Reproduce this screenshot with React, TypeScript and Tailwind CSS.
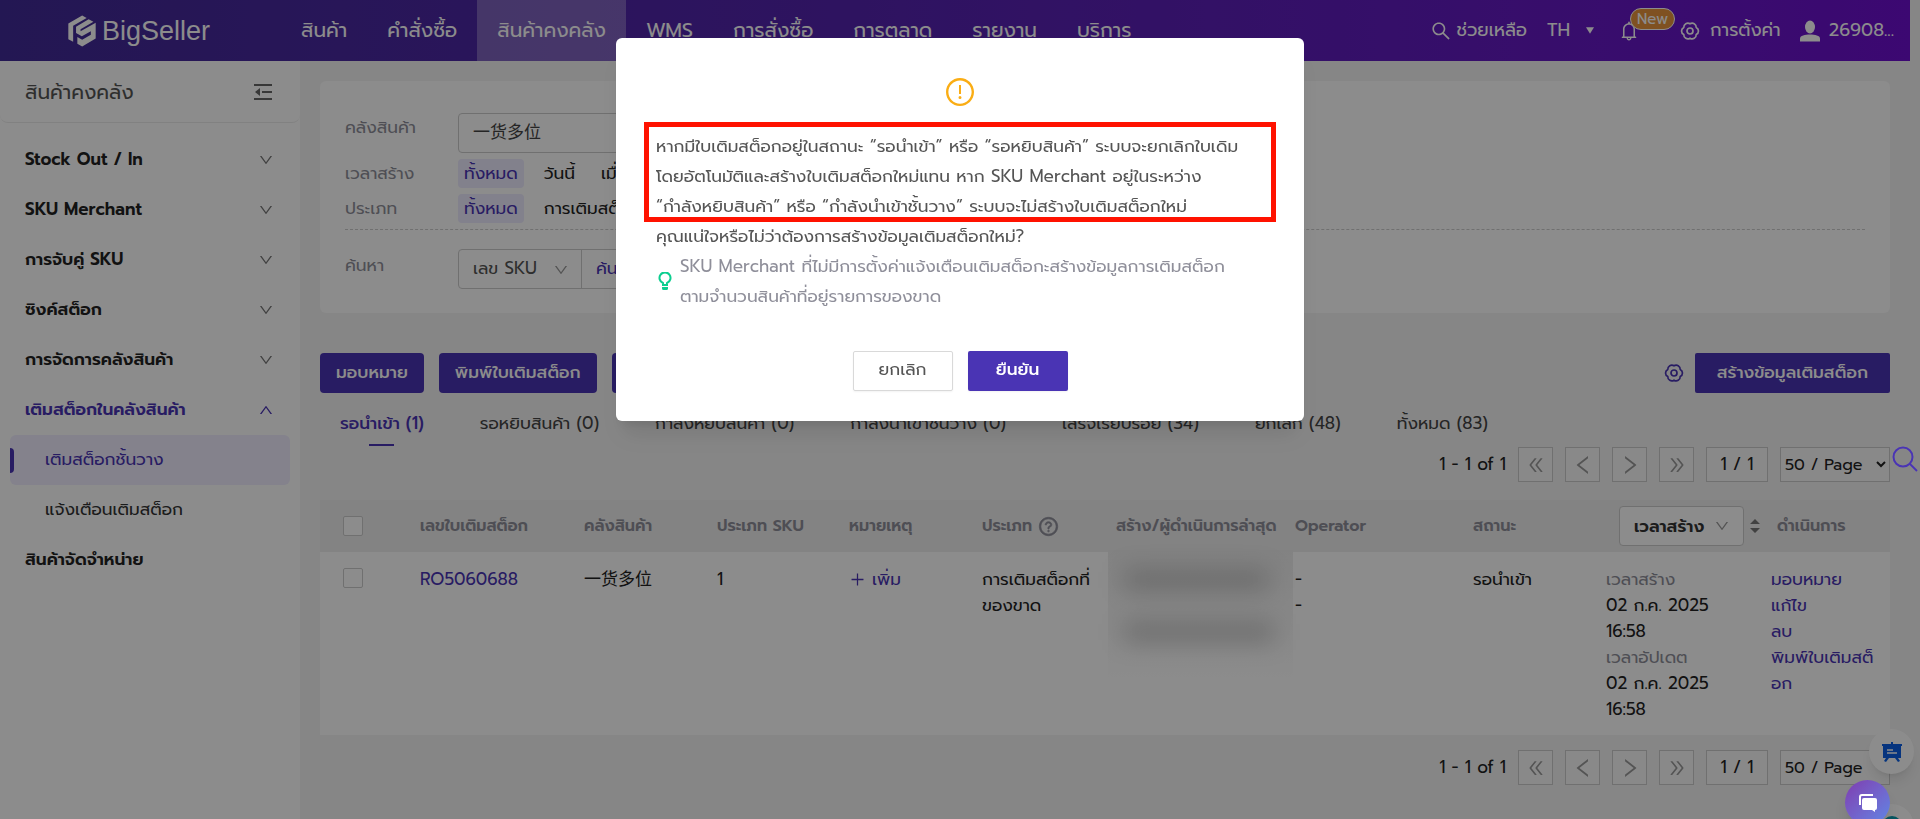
import {
  AiOutlineBell,
  AiOutlineDoubleLeft,
  AiOutlineDoubleRight,
  AiOutlineDown,
  AiOutlineExclamationCircle,
  AiOutlineLeft,
  AiOutlinePlus,
  AiOutlineQuestionCircle,
  AiOutlineRight,
  AiOutlineSearch,
  AiOutlineUp,
} from "react-icons/ai"
import clsx from "clsx"

const navLinks = ["สินค้า", "คำสั่งซื้อ", "สินค้าคงคลัง", "WMS", "การสั่งซื้อ", "การตลาด", "รายงาน", "บริการ"]

const sideLinks = ["Stock Out / In", "SKU Merchant", "การจับคู่ SKU", "ซิงค์สต็อก", "การจัดการคลังสินค้า"]

const tabs = [
  "รอนำเข้า (1)",
  "รอหยิบสินค้า (0)",
  "กำลังหยิบสินค้า (0)",
  "กำลังนำเข้าชั้นวาง (0)",
  "เสร็จเรียบร้อย (34)",
  "ยกเลิก (48)",
  "ทั้งหมด (83)",
]

const GearIcon = () => (
  <svg viewBox="0 0 20 20" className="size-5" fill="none" stroke="currentColor" strokeWidth="1.700" aria-hidden="true">
    <path
      strokeLinejoin="round"
      d="M16.200 13.600A4 4 0 0 1 10 17.200A4 4 0 0 1 3.800 13.600A4 4 0 0 1 3.800 6.400A4 4 0 0 1 10 2.800A4 4 0 0 1 16.200 6.400A4 4 0 0 1 16.200 13.600z"
    />
    <circle cx="10" cy="10" r="3" />
  </svg>
)

const Logo = () => (
  <a href="#" className="flex items-center gap-1.5 text-white">
    <svg viewBox="24 29 87 97" className="h-8 w-7" fill="currentColor" aria-hidden="true">
      <path d="M25 103V54L68 29l14 8-42 24v50z" />
      <path d="M88 41l15 8-40 23v6l47-26v49l-42 25-15-9V96l15 9 27-16V78l-28 16-18-10V64z" />
    </svg>
    <span className="font-['Liberation_Sans',sans-serif] text-[27px] leading-8">BigSeller</span>
  </a>
)

const Header = () => (
  <header className="mr-2.5 flex h-[61px] items-center bg-linear-to-r from-[#412a97] to-[#6d0fcf] pl-[68px] pr-4 text-white">
    <Logo />
    <nav className="ml-[71px] flex h-full text-[20px]">
      {navLinks.map((link) => (
        <a
          key={link}
          href="#"
          className={clsx("flex items-center whitespace-nowrap px-5 pb-0.5", link === "สินค้าคงคลัง" && "bg-white/28")}
        >
          {link}
        </a>
      ))}
    </nav>
    <div className="ml-auto flex items-center whitespace-nowrap text-[18px]">
      <a href="#" className="flex items-center gap-1">
        <AiOutlineSearch className="size-[22px]" />
        ช่วยเหลือ
      </a>
      <button type="button" className="ml-5 flex items-center gap-4">
        TH
        <svg viewBox="0 0 10 8" className="h-[7px] w-2" fill="currentColor" aria-hidden="true">
          <path d="M0 0h10L5 8z" />
        </svg>
      </button>
      <button type="button" aria-label="New" className="relative ml-6">
        <AiOutlineBell className="size-[22px]" />
        <span className="absolute bottom-3 left-3 rounded-full border border-white bg-[#e8943c] px-1.5 text-[15px] leading-5">
          New
        </span>
      </button>
      <a href="#" className="ml-10 flex items-center gap-2.5">
        <GearIcon />
        การตั้งค่า
      </a>
      <a href="#" className="ml-[18px] flex items-center gap-2">
        <svg viewBox="0 0 22 22" className="size-[22px]" fill="currentColor" aria-hidden="true">
          <ellipse cx="11" cy="7" rx="5" ry="6.5" />
          <path d="M1 21.500v-3c0-3 5-4 10-4s10 1 10 4v3z" />
        </svg>
        26908...
      </a>
    </div>
  </header>
)

const Sidebar = () => (
  <aside className="w-[300px] shrink-0 bg-white">
    <div className="flex h-[62px] items-center justify-between rounded-b-lg border-b border-[#ececec] pl-[25px] pr-7 text-[20px] text-[#555]">
      สินค้าคงคลัง
      <button type="button" aria-label="Collapse menu" className="text-[#666]">
        <svg viewBox="0 0 18 18" className="size-[18px]" fill="currentColor" aria-hidden="true">
          <path d="M0 1h18v2H0zM8 8h10v2H8zM0 15h18v2H0zM1 9l5-4v8z" />
        </svg>
      </button>
    </div>
    <nav className="px-2.5 pt-3">
      {sideLinks.map((link) => (
        <a
          key={link}
          href="#"
          className="flex h-[50px] items-center justify-between pl-[15px] pr-4 font-semibold text-[#222]"
        >
          {link}
          <AiOutlineDown className="size-4 text-[#777]" />
        </a>
      ))}
      <a href="#" className="flex h-[50px] items-center justify-between pl-[15px] pr-4 font-semibold text-[#4a34b4]">
        เติมสต็อกในคลังสินค้า
        <AiOutlineUp className="size-4" />
      </a>
      <a href="#" className="flex h-[50px] items-center rounded-md bg-[#f0edff] text-[#4a34b4]">
        <span className="mr-[31px] h-[25px] w-1 rounded-r-sm bg-[#4a34b4]" />
        เติมสต็อกชั้นวาง
      </a>
      <a href="#" className="flex h-[50px] items-center pl-[35px] text-[#333]">
        แจ้งเตือนเติมสต็อก
      </a>
      <a href="#" className="flex h-[50px] items-center pl-[15px] font-semibold text-[#222]">
        สินค้าจัดจำหน่าย
      </a>
    </nav>
  </aside>
)

const FilterRow = ({ label, options }: { label: string; options: string[] }) => (
  <div className="mt-1.5 flex h-[29px] items-center">
    <span className="w-[113px] text-[#8f8f9a]">{label}</span>
    <div className="flex gap-3.5">
      {options.map((option, i) => (
        <button
          key={option}
          type="button"
          className={clsx("h-[29px] whitespace-nowrap rounded-sm px-1.5", i === 0 && "bg-[#edebff] text-[#4a34b4]")}
        >
          {option}
        </button>
      ))}
    </div>
  </div>
)

const Filters = () => (
  <section className="rounded-md bg-white px-[25px] pb-6 pt-8">
    <div className="flex h-10">
      <label htmlFor="warehouse" className="w-[113px] pt-0.5 text-[#8f8f9a]">
        คลังสินค้า
      </label>
      <select id="warehouse" className="w-80 appearance-none rounded-sm border border-[#ccc] px-3.5 text-[#444]">
        <option>一货多位</option>
      </select>
    </div>
    <FilterRow label="เวลาสร้าง" options={["ทั้งหมด", "วันนี้", "เมื่อวาน"]} />
    <FilterRow label="ประเภท" options={["ทั้งหมด", "การเติมสต็อก"]} />
    <div className="mt-1.5 flex border-t border-dashed border-[#ccc] pt-[19px]">
      <label htmlFor="search-by" className="w-[113px] pt-1 text-[#8f8f9a]">
        ค้นหา
      </label>
      <div className="flex h-10 rounded-sm border border-[#ccc]">
        <div className="relative flex border-r border-[#ccc]">
          <select id="search-by" className="w-[122px] appearance-none pl-3.5 text-[#555]">
            <option>เลข SKU</option>
          </select>
          <AiOutlineDown className="pointer-events-none absolute right-3 top-3 size-4 text-[#999]" />
        </div>
        <select aria-label="ค้นหา" className="w-40 appearance-none pl-3.5 text-[#4a34b4]">
          <option>ค้นหา</option>
        </select>
      </div>
    </div>
  </section>
)

const Actions = () => (
  <div className="mt-10 flex items-center gap-[15px] font-medium">
    {["มอบหมาย", "พิมพ์ใบเติมสต็อก", "ลบ"].map((label) => (
      <button key={label} type="button" className="h-10 whitespace-nowrap rounded-sm bg-[#4a34b4] px-4 text-white">
        {label}
      </button>
    ))}
    <button type="button" aria-label="Settings" className="-mr-1 ml-auto text-[#4a34b4]">
      <GearIcon />
    </button>
    <button type="button" className="h-10 whitespace-nowrap rounded-xs bg-[#4a34b4] px-[22px] text-white">
      สร้างข้อมูลเติมสต็อก
    </button>
  </div>
)

const Tabs = () => (
  <div className="mt-[17px] flex gap-14 pb-px pl-5 leading-[26px] text-[#444]">
    {tabs.map((tab, i) => (
      <button
        key={tab}
        type="button"
        className={clsx("flex flex-col items-center gap-2 whitespace-nowrap", i === 0 && "font-medium text-[#4a34b4]")}
      >
        {tab}
        <span className={clsx("h-0.5 w-[25px]", i === 0 && "bg-[#4a34b4]")} />
      </button>
    ))}
  </div>
)

const pagerIcons = [
  { label: "First page", Icon: AiOutlineDoubleLeft, size: "size-5" },
  { label: "Previous page", Icon: AiOutlineLeft, size: "size-6" },
  { label: "Next page", Icon: AiOutlineRight, size: "size-6" },
  { label: "Last page", Icon: AiOutlineDoubleRight, size: "size-5" },
]

const Pagination = () => (
  <div className="flex items-center justify-end gap-3 text-[#222]">
    <span>1 - 1 of 1</span>
    {pagerIcons.map(({ label, Icon, size }) => (
      <button
        key={label}
        type="button"
        aria-label={label}
        className="flex size-[35px] items-center justify-center border border-[#ccc] bg-white/50 text-[#999]"
      >
        <Icon className={size} />
      </button>
    ))}
    <span className="flex h-[35px] w-[62px] items-center justify-center border border-[#ccc] bg-white/50">1 / 1</span>
    <select aria-label="Page size" className="h-[35px] w-[110px] border border-[#ccc] bg-white/50 text-[16px]">
      <option>50 / Page</option>
    </select>
  </div>
)

const Checkbox = ({ label }: { label: string }) => (
  <input
    type="checkbox"
    aria-label={label}
    className="block size-5 appearance-none rounded-xs border border-[#ccc] bg-white"
  />
)

const OrderTable = () => (
  <table className="mb-[15px] mt-[18px] w-full table-fixed text-left leading-[26px] text-[#222]">
    <thead className="bg-[#eee] text-[16px] text-[#8f8f9a]">
      <tr className="h-[52px] whitespace-nowrap *:p-0 *:pl-2.5 *:font-semibold">
        <th className="w-[90px]">
          <div className="pl-[13px]">
            <Checkbox label="Select all" />
          </div>
        </th>
        <th className="w-[164px]">เลขใบเติมสต็อก</th>
        <th className="w-[133px]">คลังสินค้า</th>
        <th className="w-[132px]">ประเภท SKU</th>
        <th className="w-[133px]">หมายเหตุ</th>
        <th className="w-[134px]">
          <span className="flex items-center gap-1.5">
            ประเภท <AiOutlineQuestionCircle className="size-[21px]" stroke="currentColor" strokeWidth={36} />
          </span>
        </th>
        <th className="w-[179px]">สร้าง/ผู้ดำเนินการล่าสุด</th>
        <th className="w-[178px]">Operator</th>
        <th className="w-[133px]">สถานะ</th>
        <th className="w-[165px]">
          <div className="flex items-center gap-1.5 pl-[13px]">
            <div className="relative">
              <select
                aria-label="เวลาสร้าง"
                className="block h-10 w-[125px] appearance-none rounded-sm border border-[#ccc] bg-white pl-3.5 text-[17px] font-semibold text-[#333]"
              >
                <option>เวลาสร้าง</option>
              </select>
              <AiOutlineDown className="pointer-events-none absolute right-3.5 top-3 size-4 text-[#999]" />
            </div>
            <svg viewBox="0 0 10 14" className="h-3.5 w-2.5" fill="#777" aria-hidden="true">
              <path d="M5 0l5 5H0zM5 14l5-5H0z" />
            </svg>
          </div>
        </th>
        <th className="w-[129px]">
          <span className="pl-1.5">ดำเนินการ</span>
        </th>
      </tr>
    </thead>
    <tbody className="bg-white">
      <tr className="align-top *:pb-[13px] *:pl-2.5 *:pt-3.5">
        <td>
          <div className="pl-[13px] pt-0.5">
            <Checkbox label="Select RO5060688" />
          </div>
        </td>
        <td>
          <a href="#" className="text-[#4a34b4]">
            RO5060688
          </a>
        </td>
        <td>一货多位</td>
        <td>1</td>
        <td>
          <button type="button" className="flex items-center gap-1.5 text-[#4a34b4]">
            <AiOutlinePlus className="size-[17px]" />
            เพิ่ม
          </button>
        </td>
        <td className="whitespace-nowrap">
          การเติมสต็อกที่
          <br />
          ของขาด
        </td>
        <td>
          <div className="-mx-2 -mt-4 h-32 bg-linear-to-b from-[#ededed] to-white pl-4 pt-5">
            <div className="h-5 w-[145px] bg-black/20 blur-md" />
            <div className="mt-8 h-5 w-[150px] bg-black/20 blur-md" />
          </div>
        </td>
        <td>
          -<br />-
        </td>
        <td>รอนำเข้า</td>
        <td>
          <span className="text-[#8f8f9a]">เวลาสร้าง</span>
          <br />
          02 ก.ค. 2025
          <br />
          16:58
          <br />
          <span className="text-[#8f8f9a]">เวลาอัปเดต</span>
          <br />
          02 ก.ค. 2025
          <br />
          16:58
        </td>
        <td className="whitespace-nowrap text-[#4a34b4]">
          <a href="#" className="block">
            มอบหมาย
          </a>
          <a href="#" className="block">
            แก้ไข
          </a>
          <a href="#" className="block">
            ลบ
          </a>
          <a href="#" className="block">
            พิมพ์ใบเติมสต็
            <br />
            อก
          </a>
        </td>
      </tr>
    </tbody>
  </table>
)

const ConfirmModal = () => (
  <div className="fixed inset-0 z-20 flex items-start justify-center bg-black/45 pt-[38px]">
    <div
      role="dialog"
      aria-modal="true"
      className="flex w-[688px] flex-col items-center rounded-md bg-white px-10 pb-[30px] pt-[38px] shadow-xl"
    >
      <AiOutlineExclamationCircle className="size-8 text-[#faad14]" />
      <div className="mt-[23px] w-full whitespace-nowrap leading-[30px] text-[#555]">
        <div className="relative">
          {/* highlight frame round the warning */}
          <div className="absolute -inset-x-3 -bottom-px -top-[9px] border-5 border-[#ff1200]" />
          <p>
            หากมีใบเติมสต็อกอยู่ในสถานะ “รอนำเข้า” หรือ “รอหยิบสินค้า” ระบบจะยกเลิกใบเดิม
            <br />
            โดยอัตโนมัติและสร้างใบเติมสต็อกใหม่แทน หาก SKU Merchant อยู่ในระหว่าง
            <br />
            “กำลังหยิบสินค้า” หรือ “กำลังนำเข้าชั้นวาง” ระบบจะไม่สร้างใบเติมสต็อกใหม่
          </p>
        </div>
        <p>คุณแน่ใจหรือไม่ว่าต้องการสร้างข้อมูลเติมสต็อกใหม่?</p>
        <div className="flex items-center gap-2 pl-0.5 text-[#8f8f9a]">
          <svg viewBox="0 0 14 18" className="h-[18px] w-3.5" aria-hidden="true">
            <path
              d="M5 12.500V11a5.500 5.500 0 1 1 4 0v1.500"
              fill="none"
              stroke="#0cce8f"
              strokeWidth="2"
              strokeLinejoin="round"
            />
            <path d="M4 12h6v2H4zM4 15h6v1.500q0 1.500-1.500 1.500h-3Q4 18 4 16.500z" fill="#0cce8f" />
          </svg>
          <p>
            SKU Merchant ที่ไม่มีการตั้งค่าแจ้งเตือนเติมสต็อกะสร้างข้อมูลการเติมสต็อก
            <br />
            ตามจำนวนสินค้าที่อยู่รายการของขาด
          </p>
        </div>
      </div>
      <div className="mt-10 flex gap-[15px]">
        <button type="button" className="h-10 w-[100px] rounded-xs border border-[#d9d9d9] pb-0.5 text-[#555] shadow-xs">
          ยกเลิก
        </button>
        <button type="button" className="h-10 w-[100px] rounded-xs bg-[#4a34b4] pb-0.5 font-medium text-white shadow-xs">
          ยืนยัน
        </button>
      </div>
    </div>
  </div>
)

const FloatingTools = () => (
  <>
    <button type="button" aria-label="Search" className="fixed right-0.5 top-[446px] z-30 text-[#4a34b4]">
      <svg viewBox="0 0 26 26" className="size-[26px]" fill="none" stroke="currentColor" strokeWidth="2" aria-hidden="true">
        <circle cx="11" cy="11" r="9.500" />
        <path d="M18 18l7 7" />
      </svg>
    </button>
    <button
      type="button"
      aria-label="Tutorials"
      className="fixed bottom-[45px] right-1.5 z-10 flex size-[45px] items-center justify-center rounded-full bg-white shadow-lg"
    >
      <svg viewBox="0 0 20 20" className="size-5" aria-hidden="true">
        <path d="M9 0h2v2h9v2h-1v12h-3l2 3-2 1-3-4H7l-3 4-2-1 2-3H1V4H0V2h9z" fill="#0b60e6" />
        <path d="M5 8h6M5 11h10" stroke="#fff" strokeWidth="1.500" />
      </svg>
    </button>
    <button
      type="button"
      aria-label="Contact"
      className="fixed -bottom-[30px] right-1.5 z-10 flex size-[45px] justify-center rounded-full bg-white pt-3 shadow-lg"
    >
      <span className="size-5 rounded-full bg-[#0b9bb0]" />
    </button>
    <button
      type="button"
      aria-label="Chat"
      className="fixed -bottom-1.5 right-[30px] z-30 flex size-[45px] items-center justify-center rounded-full bg-linear-to-br from-[#7d3bb0] to-[#5a86e6] shadow-lg"
    >
      <svg viewBox="0 0 20 18" className="h-[18px] w-5" aria-hidden="true">
        <path d="M2 11V3a2 2 0 0 1 2-2h11" fill="none" stroke="#fff" strokeWidth="2" />
        <path d="M6 4h11a2 2 0 0 1 2 2v8a2 2 0 0 1-2 2v2l-3-2H6a2 2 0 0 1-2-2V6a2 2 0 0 1 2-2z" fill="#fff" />
      </svg>
    </button>
  </>
)

export default function App() {
  return (
    <div className="flex min-h-screen flex-col bg-[#f5f5f5] font-[Prompt,'Noto_Sans_Thai','Noto_Sans','Noto_Sans_CJK_SC',sans-serif] text-[17px] text-[#222]">
      <Header />
      <div className="flex grow">
        <Sidebar />
        <main className="min-w-0 grow pb-5 pl-5 pr-[30px] pt-5">
          <Filters />
          <Actions />
          <Tabs />
          <Pagination />
          <OrderTable />
          <Pagination />
        </main>
      </div>
      <ConfirmModal />
      <FloatingTools />
    </div>
  )
}
